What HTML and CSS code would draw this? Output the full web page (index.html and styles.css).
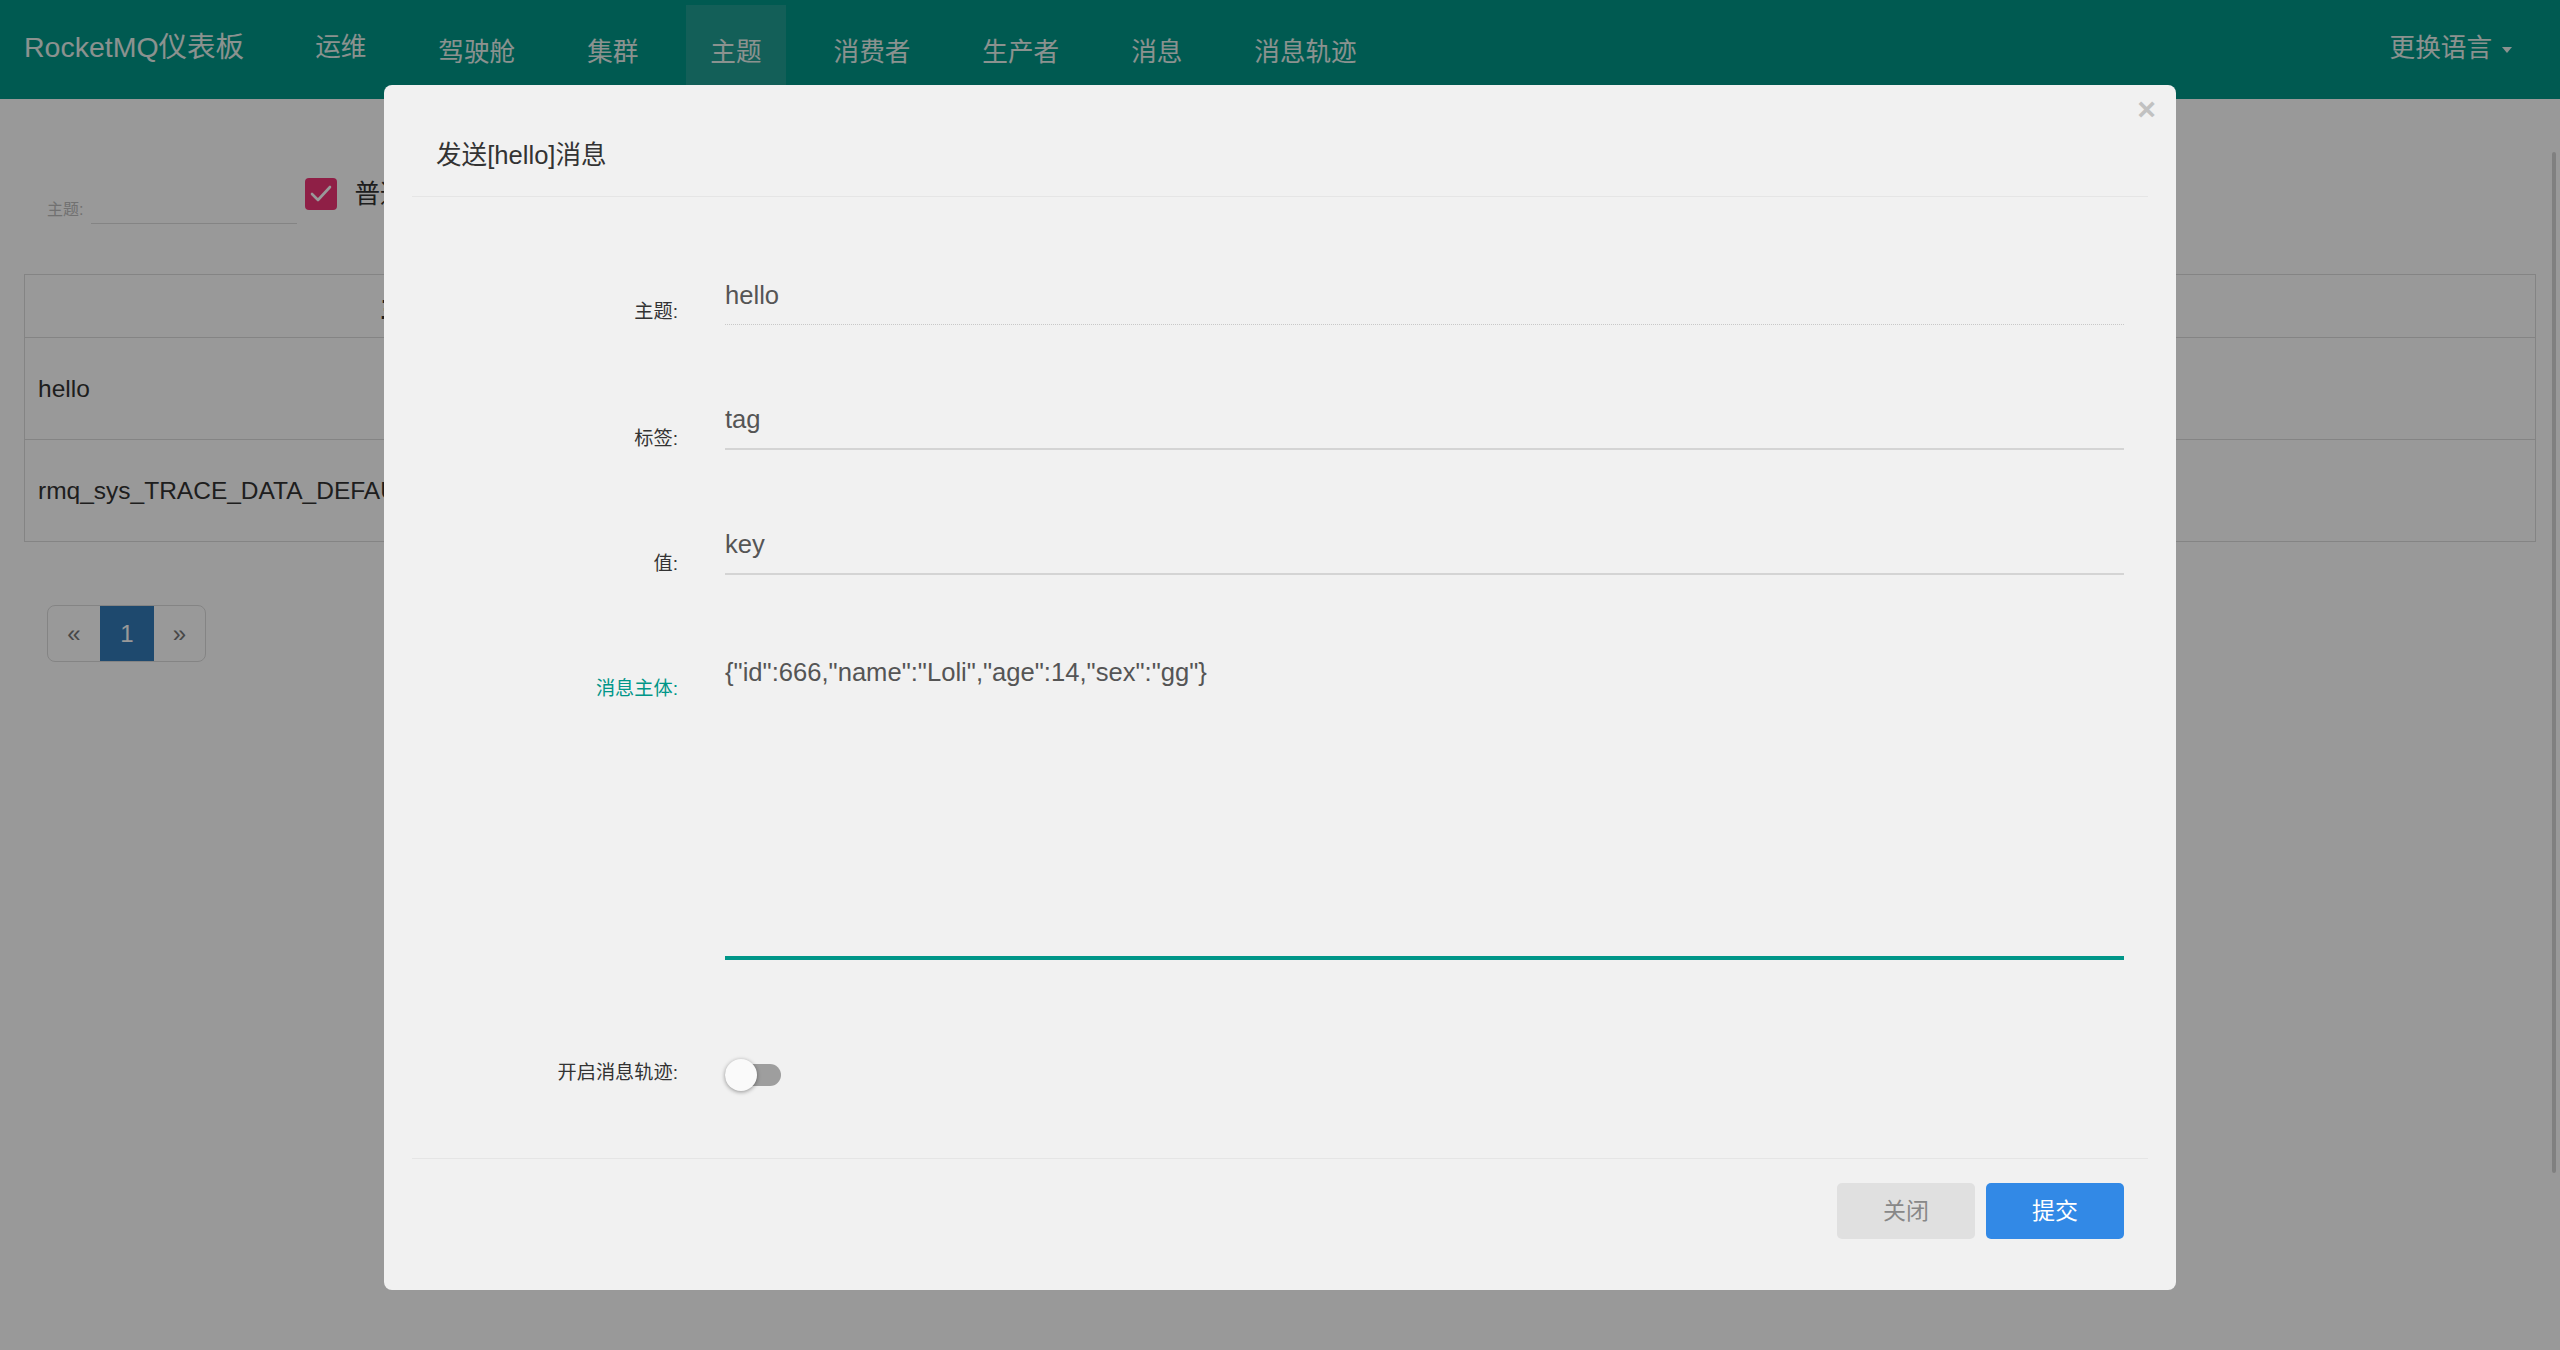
FILE: index.html
```html
<!DOCTYPE html>
<html lang="zh-CN">
<head>
<meta charset="utf-8">
<title>RocketMQ仪表板</title>
<link rel="stylesheet" href="styles.css">
</head>
<body>
<header class="navbar">
  <div class="brand">RocketMQ仪表板</div>
  <ul class="nav">
    <li class="nav-item nav-item-dropdown">运维</li>
    <li class="nav-item">驾驶舱</li>
    <li class="nav-item">集群</li>
    <li class="nav-item active">主题</li>
    <li class="nav-item">消费者</li>
    <li class="nav-item">生产者</li>
    <li class="nav-item">消息</li>
    <li class="nav-item">消息轨迹</li>
  </ul>
  <div class="lang">更换语言<span class="caret"></span></div>
</header>

<main class="container">
  <div class="filter">
    <label class="filter-label">主题:</label>
    <div class="filter-input"></div>
    <div class="check-group">
      <span class="checkbox">
        <svg width="32" height="32" viewBox="0 0 32 32"><polyline points="7,16 13,22 25,9" fill="none" stroke="#ffffff" stroke-width="2.6" stroke-linecap="round" stroke-linejoin="round"/></svg>
      </span>
      <span class="check-text">普通</span>
    </div>
  </div>

  <div class="table">
    <div class="tr th"><div class="cell center">主题</div><div class="cell center">操作</div></div>
    <div class="tr"><div class="cell">hello</div><div class="cell"></div></div>
    <div class="tr"><div class="cell">rmq_sys_TRACE_DATA_DEFAULT_TOPIC</div><div class="cell"></div></div>
  </div>

  <nav class="pagination">
    <span class="page">«</span>
    <span class="page active">1</span>
    <span class="page last">»</span>
  </nav>
</main>

<div class="scroll-thumb"></div>
<div class="backdrop"></div>

<div class="modal">
  <div class="dialog">
    <span class="close">×</span>
    <div class="modal-header">
      <h4 class="modal-title">发送[hello]消息</h4>
    </div>
    <div class="modal-body">
      <div class="form-row">
        <label class="form-label">主题:</label>
        <div class="field disabled">hello</div>
      </div>
      <div class="form-row">
        <label class="form-label">标签:</label>
        <div class="field">tag</div>
      </div>
      <div class="form-row">
        <label class="form-label">值:</label>
        <div class="field">key</div>
      </div>
      <div class="form-row tall">
        <label class="form-label focus">消息主体:</label>
        <div class="field textarea">{"id":666,"name":"Loli","age":14,"sex":"gg"}</div>
      </div>
      <div class="form-row">
        <label class="form-label">开启消息轨迹:</label>
        <div class="switch"><span class="switch-track"></span><span class="switch-thumb"></span></div>
      </div>
    </div>
    <div class="modal-footer">
      <button class="btn btn-default">关闭</button>
      <button class="btn btn-primary">提交</button>
    </div>
  </div>
</div>
</body>
</html>
```

FILE: styles.css
```css
* { box-sizing: border-box; margin: 0; padding: 0; }
html, body { height: 100%; }
body {
  font-family: "Liberation Sans", "Noto Sans CJK SC", sans-serif;
  background: #ffffff;
  color: #333333;
  overflow: hidden;
}
ul { list-style: none; }

/* navbar */
.navbar {
  display: flex;
  height: 99px;
  background: #009688;
  color: #e8f3ef;
}
.brand {
  height: 94px;
  line-height: 94px;
  padding-left: 24px;
  font-size: 28.5px;
  white-space: nowrap;
}
.nav {
  display: flex;
  gap: 24px;
  margin-left: 47px;
  margin-top: 5px;
}
.nav-item {
  display: flex;
  align-items: center;
  padding: 0 24px;
  font-size: 25.6px;
  line-height: 32px;
  white-space: nowrap;
}
.nav-item-dropdown { padding-bottom: 10px; }
.nav-item.active { background: #209e93; }
.lang {
  margin-left: auto;
  height: 96px;
  display: flex;
  align-items: center;
  padding-right: 48px;
  font-size: 25.6px;
  line-height: 32px;
  white-space: nowrap;
}
.caret {
  width: 0;
  height: 0;
  border-top: 6px solid #e8f3ef;
  border-left: 5px solid transparent;
  border-right: 5px solid transparent;
  margin-left: 10px;
  margin-top: 4px;
}

/* page content */
.container { padding: 71px 24px 0; }
.filter {
  display: flex;
  align-items: flex-end;
  height: 54px;
  padding-left: 23px;
}
.filter-label {
  font-size: 16px;
  line-height: 24px;
  margin-bottom: 2px;
  color: #bdbdbd;
}
.filter-input {
  width: 206px;
  height: 40px;
  margin-left: 8px;
  border-bottom: 1px solid #dddddd;
}
.check-group {
  display: flex;
  align-items: center;
  height: 32px;
  margin: 0 0 14px 8px;
}
.checkbox {
  display: flex;
  width: 32px;
  height: 32px;
  border-radius: 4px;
  background: #ee3476;
}
.check-text {
  margin-left: 17px;
  font-size: 25.6px;
  line-height: 32px;
  color: #333333;
  white-space: nowrap;
}

.table {
  margin-top: 50px;
  border: 1px solid #dddddd;
  font-size: 24.5px;
  color: #333333;
}
.tr {
  display: grid;
  grid-template-columns: 760px 1fr;
  align-items: center;
  height: 102px;
  border-top: 1px solid #dddddd;
}
.tr.th {
  height: 62px;
  border-top: none;
  font-weight: bold;
}
.cell { padding: 0 13px; white-space: nowrap; }
.cell.center { text-align: center; }

.pagination {
  display: flex;
  width: fit-content;
  height: 57px;
  margin: 63px 0 0 23px;
  border: 1px solid #dddddd;
  border-radius: 8px;
  overflow: hidden;
  font-size: 24px;
}
.page {
  display: flex;
  align-items: center;
  justify-content: center;
  width: 52px;
  color: #777777;
}
.page.active {
  width: 54px;
  background: #337ab7;
  color: #ffffff;
}
.page.last { width: 51px; }

.scroll-thumb {
  position: fixed;
  top: 152px;
  right: 4px;
  width: 4px;
  height: 1021px;
  border-radius: 2px;
  background: #d5d5d5;
}

/* modal */
.backdrop {
  position: fixed;
  inset: 0;
  background: rgba(0, 0, 0, 0.4);
}
.modal {
  position: fixed;
  inset: 0;
}
.dialog {
  position: relative;
  width: 1792px;
  margin: 85px auto 0;
  padding: 0 28px;
  background: #f1f1f1;
  border-radius: 8px;
}
.close {
  position: absolute;
  top: 8px;
  right: 20px;
  font-size: 32px;
  font-weight: bold;
  line-height: 32px;
  color: #c1c1c1;
}
.modal-header {
  padding: 52px 24px 23px;
  border-bottom: 1px solid #e5e5e5;
}
.modal-title {
  font-size: 25.6px;
  line-height: 36px;
  font-weight: normal;
  color: #333333;
}
.modal-body { padding: 68px 24px 67px; }
.form-row {
  display: grid;
  grid-template-columns: 242px 1fr;
  column-gap: 47px;
  align-items: start;
  margin-bottom: 64px;
}
.form-row.tall { margin-bottom: 66px; }
.form-row:last-child { margin-bottom: 0; }
.form-label {
  padding-top: 40px;
  text-align: right;
  font-size: 19.2px;
  line-height: 20px;
  color: #333333;
  white-space: nowrap;
}
.form-row:first-child .form-label { padding-top: 37px; }
.form-row:last-child .form-label { padding-top: 39px; }
.form-label.focus { color: #009688; }
.field {
  padding: 12px 0 11px;
  font-size: 25.6px;
  line-height: 36px;
  color: #555555;
  border-bottom: 2px solid #d4d4d4;
  white-space: nowrap;
}
.field.disabled { border-bottom: 1px dotted #c8c8c8; }
.field.textarea {
  height: 319px;
  padding-top: 15px;
  border-bottom-color: #009688;
  box-shadow: 0 2px 0 #009688;
}
.switch {
  position: relative;
  width: 56px;
  height: 32px;
  margin-top: 35px;
}
.switch-track {
  position: absolute;
  left: 0;
  top: 5px;
  width: 56px;
  height: 22px;
  border-radius: 11px;
  background: #9e9e9e;
}
.switch-thumb {
  position: absolute;
  left: 0;
  top: 0;
  width: 32px;
  height: 32px;
  border-radius: 50%;
  background: #fafafa;
  box-shadow: 0 1px 4px rgba(0, 0, 0, 0.4);
}
.modal-footer {
  display: flex;
  justify-content: flex-end;
  gap: 11px;
  padding: 24px 24px 51px;
  border-top: 1px solid #e5e5e5;
}
.btn {
  width: 138px;
  height: 56px;
  border: none;
  border-radius: 5px;
  font-family: "Liberation Sans", "Noto Sans CJK SC", sans-serif;
  font-size: 23px;
  line-height: 56px;
  text-align: center;
}
.btn-default { background: #e0e0e0; color: #888888; }
.btn-primary { background: #3289e6; color: #ffffff; }
```
